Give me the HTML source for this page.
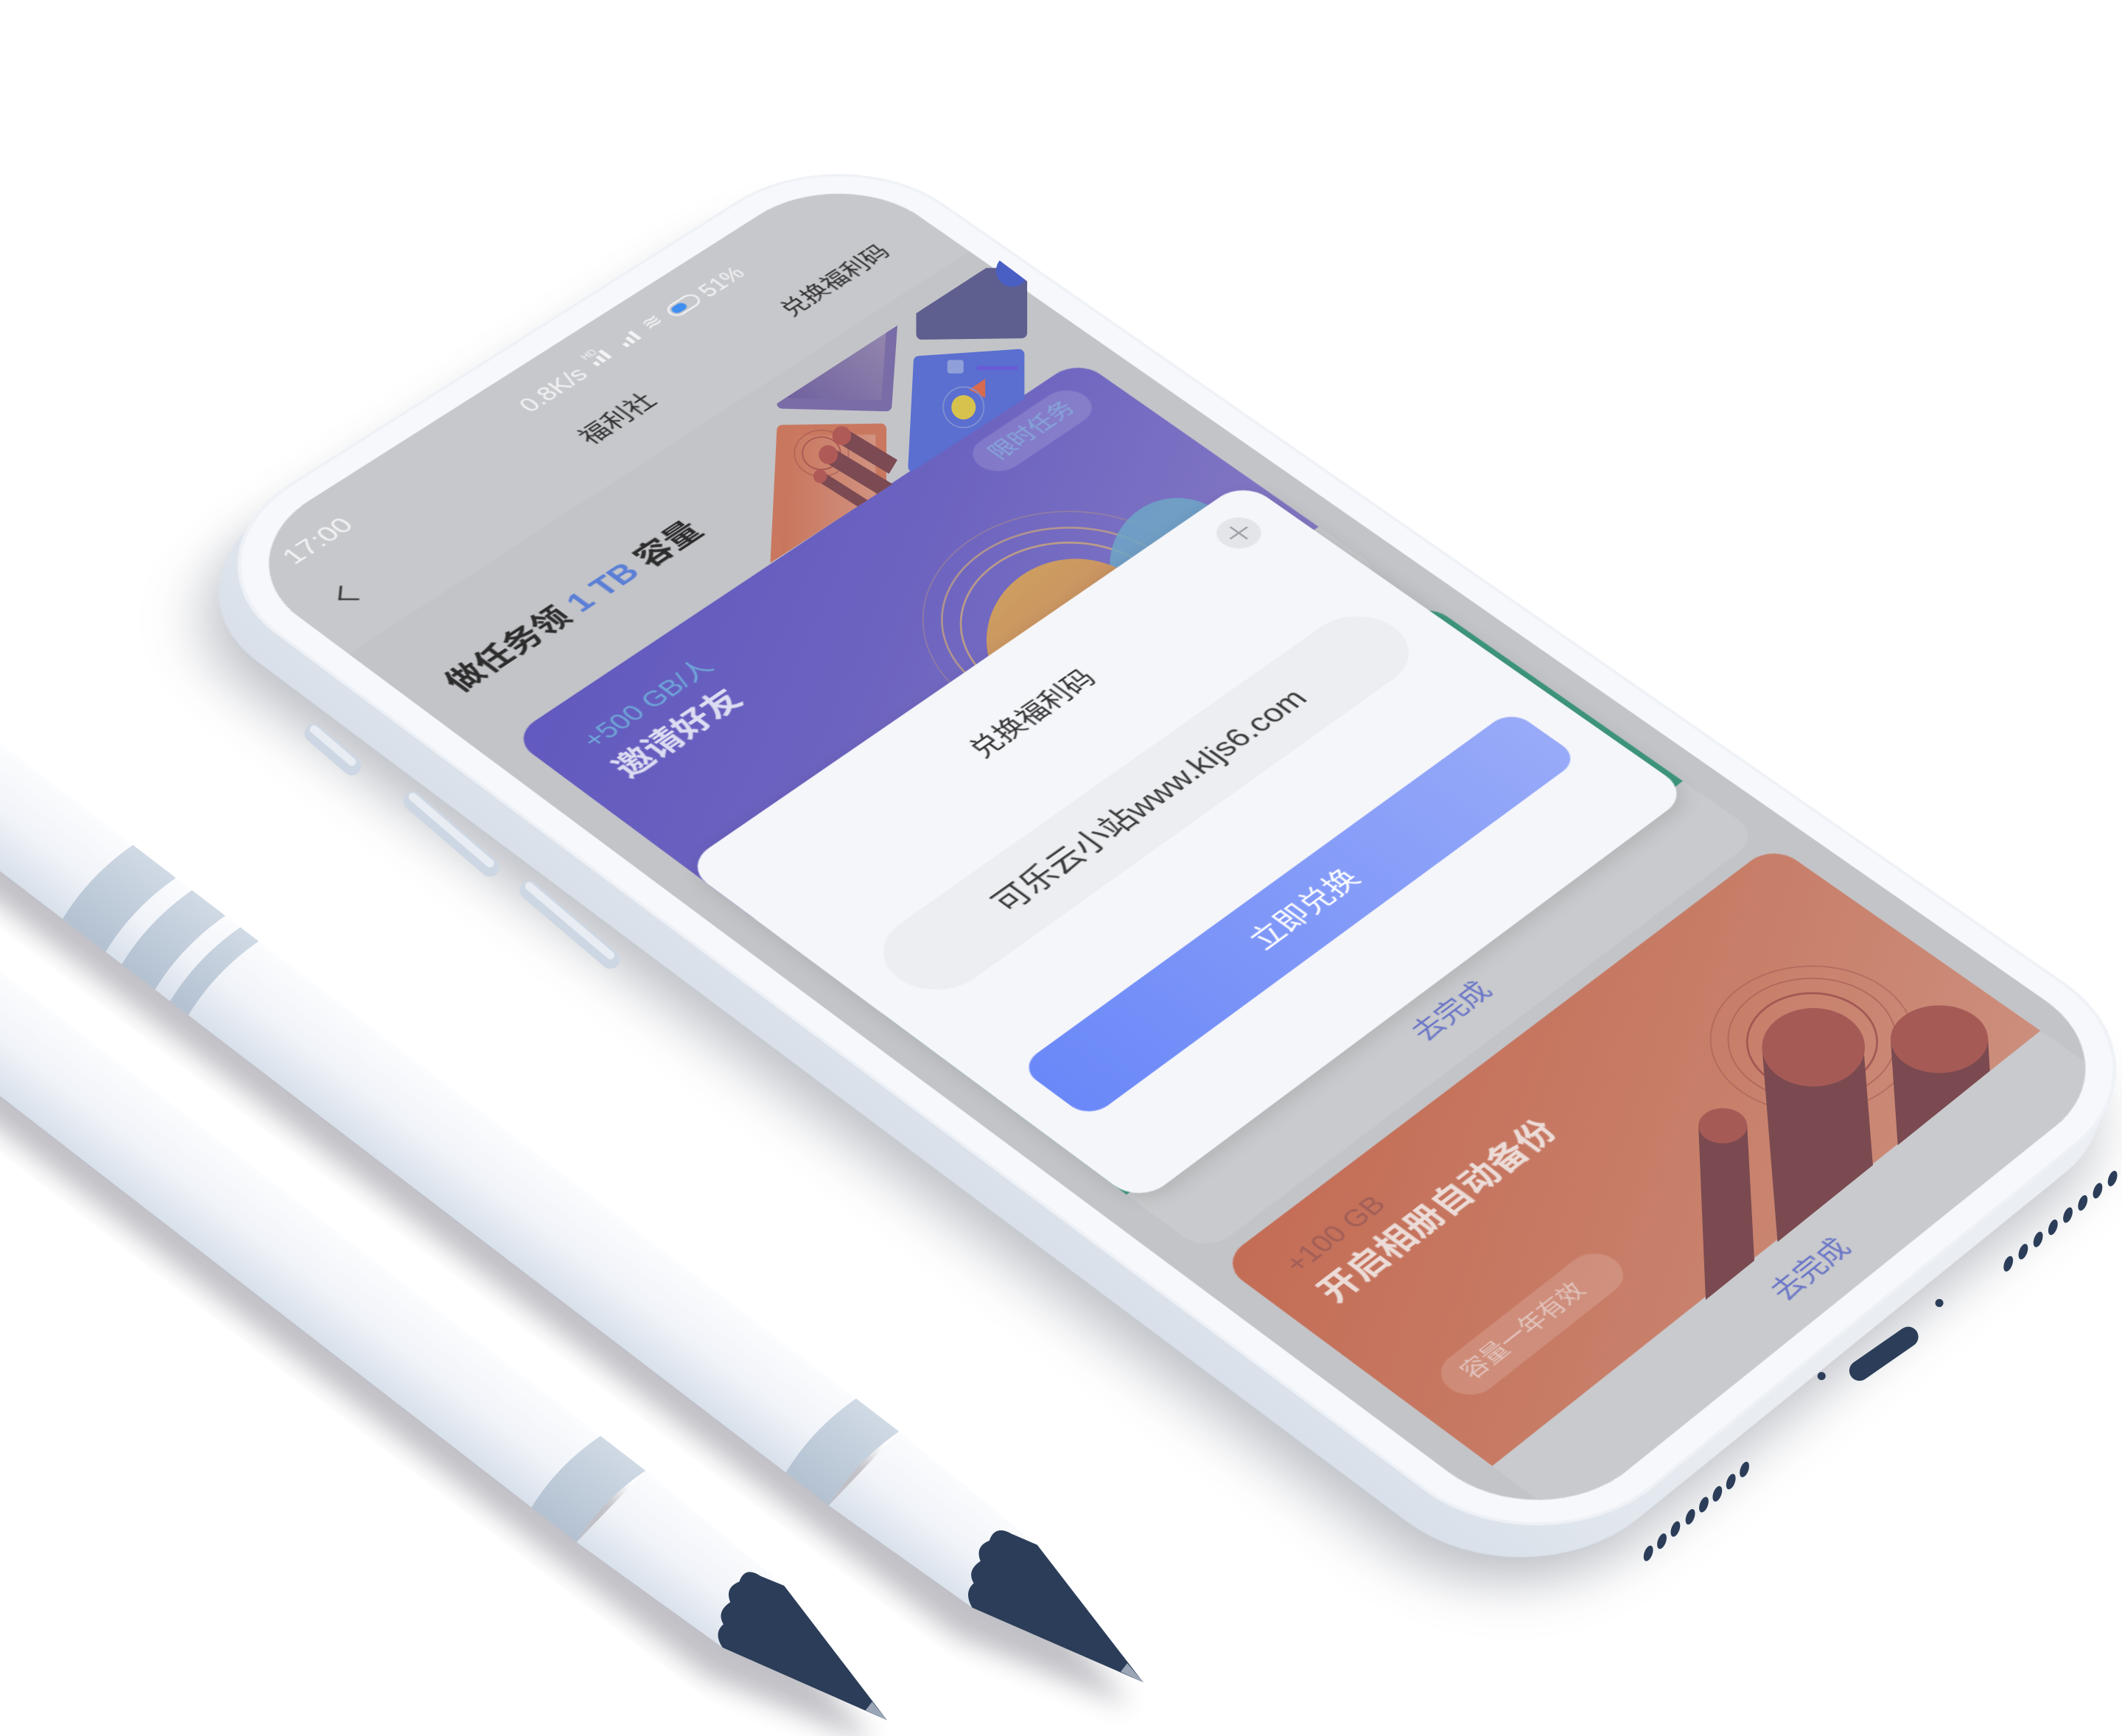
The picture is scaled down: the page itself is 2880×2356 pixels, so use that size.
<!DOCTYPE html>
<html><head><meta charset="utf-8">
<style>
html,body{margin:0;padding:0}
body{width:2880px;height:2356px;background:#fff;position:relative;overflow:hidden;font-family:"Liberation Sans","Noto Sans CJK SC",sans-serif}
.m{position:absolute;left:0;top:0;width:750px;height:1624px;transform-origin:0 0;
transform:matrix3d(1.20947,-0.6992,0,0.00007251, 1.01336,0.73060,0,-0.00004337, 0,0,1,0, 297.6,756.8,0,1)}
.m div{position:absolute;box-sizing:border-box}
.t{white-space:nowrap;line-height:1}
.ov{position:absolute;left:0;top:0;width:2880px;height:2356px}
</style></head><body>

<svg class="ov" viewBox="0 0 1568 1283" preserveAspectRatio="none" style="z-index:0">
<defs>
<linearGradient id="pg" x1="0" y1="0" x2="0" y2="1"><stop offset="0" stop-color="#fbfcfe"/><stop offset=".55" stop-color="#f0f3f8"/><stop offset="1" stop-color="#d8e0ea"/></linearGradient>
<linearGradient id="bg" x1="0" y1="0" x2="0" y2="1"><stop offset="0" stop-color="#d0dae5"/><stop offset="1" stop-color="#b3c1d1"/></linearGradient>
<filter id="bl" x="-20%" y="-20%" width="140%" height="140%"><feGaussianBlur stdDeviation="9"/></filter>
</defs>
<g transform="translate(0,763.75) rotate(37.75)">
<path d="M-300,-30 L575,-30 L700,-30 L829,0 L700,36 L-300,36Z" fill="#334" opacity=".3" filter="url(#bl)" transform="translate(4,20)"/>
<rect x="-300" y="-36.5" width="833" height="73" fill="url(#pg)"/>
<path d="M533,-36.5 Q521,0 525,36.5 L567,36.5 Q563,0 575,-36.5Z" fill="url(#bg)"/>
<path d="M575,-36.5 L708,-32 L700,32 L567,36.5Z" fill="url(#pg)"/>
<path d="M708,-32 L829,0 L700,32 Q688,28 690,18 Q680,14 684,2 Q674,-4 680,-14 Q676,-26 690,-27Z" fill="#2b3d58"/>
<path d="M812,-4 L829,0 L812,4Z" fill="#9aa6b6"/>
</g>
<g transform="translate(0,596.5) rotate(37.44)">
<path d="M-300,-30 L768,-30 L930,-30 L1064,0 L930,37 L-300,37Z" fill="#334" opacity=".3" filter="url(#bl)" transform="translate(4,20)"/>
<rect x="-300" y="-37.5" width="1068" height="75" fill="url(#pg)"/>
<path d="M95,-37.5 Q83,0 87,37.5 L127,37.5 Q123,0 135,-37.5Z" fill="url(#bg)"/>
<path d="M150,-37.5 Q138,0 142,37.5 L173,37.5 Q169,0 181,-37.5Z" fill="url(#bg)"/>
<path d="M195,-37.5 Q183,0 187,37.5 L204,37.5 Q200,0 212,-37.5Z" fill="url(#bg)"/>
<path d="M768,-37.5 Q756,0 760,37.5 L800,37.5 Q796,0 808,-37.5Z" fill="url(#bg)"/>
<path d="M808,-37.5 L940,-33 L930,33 L800,37.5Z" fill="url(#pg)"/>
<path d="M940,-33 L1064,0 L930,33 Q918,28 920,18 Q910,14 914,2 Q904,-4 910,-14 Q906,-26 920,-28Z" fill="#2b3d58"/>
<path d="M1046,-4 L1064,0 L1046,4Z" fill="#9aa6b6"/>
</g>
</svg>

<div class="m" style="z-index:1">
  <div style="left:-90px;top:0px;width:806px;height:1680px;border-radius:140px;background:rgba(40,50,70,.3);filter:blur(26px)"></div>
  <div style="left:-62px;top:-14px;width:806px;height:1680px;border-radius:135px;background:linear-gradient(90deg,#d9e0e9,#e9edf2 30%,#eceff4)"></div>
  <div style="left:-28px;top:-28px;width:806px;height:1680px;border-radius:135px;background:#f7f8fb;box-shadow:inset 0 0 0 3px #eef1f6"></div>
  <div style="left:0;top:0;width:750px;height:1624px;border-radius:105px;overflow:hidden;background:#c3c4c8">
    <div style="left:0;top:0;width:750px;height:170px;background:#c7c8cc"></div>
    <div class="t" style="left:40px;top:30px;font-size:28px;color:#f3f3f5">17:00</div>
    <div class="t" style="left:318px;top:32px;font-size:25px;color:#f3f3f5">0.8K/s</div>
    <div class="t" style="left:400px;top:28px;font-size:10px;color:#f3f3f5">HD</div>
    <div style="left:402px;top:42px;width:4px;height:6px;background:#f3f3f5"></div>
    <div style="left:409px;top:38px;width:4px;height:10px;background:#f3f3f5"></div>
    <div style="left:416px;top:34px;width:4px;height:14px;background:#f3f3f5"></div>
    <div style="left:438px;top:42px;width:4px;height:6px;background:#f3f3f5"></div>
    <div style="left:445px;top:38px;width:4px;height:10px;background:#f3f3f5"></div>
    <div style="left:452px;top:34px;width:4px;height:14px;background:#f3f3f5"></div>
    <div class="t" style="left:468px;top:28px;font-size:22px;color:#f3f3f5">≋</div>
    <div style="left:496px;top:33px;width:34px;height:18px;border:2px solid #f3f3f5;border-radius:9px"><div style="left:2px;top:2px;width:15px;height:10px;border-radius:5px;background:#3f8ef0"></div></div>
    <div class="t" style="left:536px;top:32px;font-size:23px;color:#f3f3f5">51%</div>
    <div style="left:42px;top:104px;width:18px;height:18px;border-left:2.5px solid #333;border-bottom:2.5px solid #333;transform:rotate(45deg)"></div>
    <div class="t" style="left:328px;top:99px;font-size:27px;color:#333">福利社</div>
    <div class="t" style="left:572px;top:102px;font-size:25px;color:#2f2f2f">兑换福利码</div>
    <div class="t" style="left:36px;top:246px;font-size:33px;font-weight:bold;color:#2c2c2c">做任务领 <span style="color:#5b7fd6">1 TB</span> 容量</div>

    <div style="left:30px;top:345px;width:690px;height:395px;border-radius:28px;background:#c9cacd;overflow:hidden">
      <div style="left:0;top:0;width:690px;height:310px;background:linear-gradient(150deg,#6159be 0%,#6c63c0 45%,#8479c4 100%)"></div>
      <div class="t" style="left:42px;top:40px;font-size:27px;color:#6fa6d8">+500 GB/人</div>
      <div class="t" style="left:38px;top:82px;font-size:34px;font-weight:bold;color:#dcdcf2">邀请好友</div>
      <div style="left:528px;top:16px;width:132px;height:46px;border-radius:23px;background:rgba(255,255,255,.14)"></div>
      <div class="t" style="left:546px;top:27px;font-size:24px;color:#86a6da">限时任务</div>
      <div class="t" style="left:303px;top:338px;font-size:28px;color:#6a76c6">去完成</div>
    </div>
    <div style="left:30px;top:790px;width:690px;height:415px;border-radius:28px;background:#c9cacd;overflow:hidden">
      <div style="left:0;top:0;width:690px;height:320px;background:#3f9a80"></div>
      <div class="t" style="left:303px;top:355px;font-size:28px;color:#6a76c6">去完成</div>
    </div>
    <div style="left:30px;top:1220px;width:690px;height:440px;border-radius:28px;background:#c9cacd;overflow:hidden">
      <div style="left:0;top:0;width:690px;height:320px;background:linear-gradient(150deg,#c46c55 0%,#c77c66 50%,#cc8e7c 100%)"></div>
      <div class="t" style="left:38px;top:34px;font-size:27px;color:#a05e57">+100 GB</div>
      <div class="t" style="left:36px;top:74px;font-size:34px;font-weight:bold;color:#ecdcd8">开启相册自动备份</div>
      <div style="left:36px;top:212px;width:200px;height:48px;border-radius:24px;background:rgba(255,255,255,.15)"></div>
      <div class="t" style="left:56px;top:224px;font-size:23px;color:#e2c4bd">容量一年有效</div>
      <div class="t" style="left:303px;top:350px;font-size:28px;color:#6a76c6">去完成</div>
    </div>
  </div>
</div>

<svg class="ov" viewBox="0 0 1568 1283" preserveAspectRatio="none" style="z-index:2">
<defs>
<clipPath id="tc"><polygon points="272,494 738,192 820,254 354,555"/></clipPath>
<clipPath id="pc"><polygon points="392,556 806,285 990,415 574,693"/></clipPath>
<clipPath id="oc"><polygon points="910,935 1320,640 1502,766 1106,1085"/></clipPath>
<linearGradient id="og" x1="0" y1="0" x2="1" y2="0"><stop offset="0" stop-color="#c8735a"/><stop offset="1" stop-color="#d19482"/></linearGradient>
<linearGradient id="ug" x1="0" y1="1" x2="1" y2="0"><stop offset="0" stop-color="#6e5f9e"/><stop offset="1" stop-color="#9a8db0"/></linearGradient>
<linearGradient id="sg" x1="0" y1="0" x2="1" y2="1"><stop offset="0" stop-color="#d0a45e"/><stop offset="1" stop-color="#c07a6a"/></linearGradient>
</defs>
<g clip-path="url(#tc)" stroke-linejoin="round">
  <polygon points="578,235 660,228 655,300 578,298" fill="url(#ug)" stroke="#7a6ca6" stroke-width="8"/>
  <polygon points="681,202 755,202 755,246 681,247" fill="#5e5f8e" stroke="#5e5f8e" stroke-width="8"/>
  <circle cx="748" cy="200" r="12" fill="#4a5fc4"/>
  <polygon points="578,318 651,317 651,420 573,420" fill="url(#og)" stroke="#c9785f" stroke-width="8"/>
  <ellipse cx="607" cy="335" rx="14" ry="12" fill="none" stroke="#a85a52" stroke-width="1"/>
  <ellipse cx="607" cy="335" rx="20" ry="17" fill="none" stroke="#a85a52" stroke-width="1" opacity=".6"/>
  <line x1="622" y1="322" x2="660" y2="345" stroke="#7b4a52" stroke-width="12"/>
  <line x1="612" y1="336" x2="660" y2="365" stroke="#7b4a52" stroke-width="12"/>
  <line x1="606" y1="352" x2="650" y2="380" stroke="#7b4a52" stroke-width="8"/>
  <circle cx="622" cy="322" r="7" fill="#b05a58"/><circle cx="612" cy="336" r="7" fill="#b05a58"/><circle cx="606" cy="352" r="5" fill="#b05a58"/>
  <polygon points="679,267 753,262 753,345 675,345" fill="#5a6fd0" stroke="#5a6fd0" stroke-width="8"/>
  <rect x="700" y="266" width="12" height="10" rx="2" fill="#8f9fd8"/>
  <polygon points="716,288 728,280 728,294" fill="#d86a50"/>
  <circle cx="712" cy="301" r="15" fill="none" stroke="#7f8fd0" stroke-width="1"/>
  <circle cx="712" cy="301" r="9" fill="#d8c24e"/>
  <line x1="722" y1="272" x2="752" y2="272" stroke="#6a5ad8" stroke-width="3"/>
</g>
<g clip-path="url(#pc)">
  <ellipse cx="790" cy="458" rx="108" ry="80" fill="none" stroke="#c8a070" stroke-width="1" opacity=".35"/>
  <ellipse cx="790" cy="458" rx="94" ry="68" fill="none" stroke="#d8b070" stroke-width="1.5" opacity=".6"/>
  <ellipse cx="790" cy="461" rx="80" ry="60" fill="none" stroke="#d8b070" stroke-width="1.5" opacity=".7"/>
  <circle cx="870" cy="418" r="50" fill="#6fa6c6" opacity=".85"/>
  <ellipse cx="795" cy="473" rx="66" ry="60" fill="url(#sg)"/>
</g>
<g clip-path="url(#oc)">
  <ellipse cx="1339" cy="768" rx="75" ry="54" fill="none" stroke="#a85e55" stroke-width="1" opacity=".6"/>
  <ellipse cx="1339" cy="768" rx="62" ry="45" fill="none" stroke="#a85e55" stroke-width="1" opacity=".7"/>
  <ellipse cx="1339" cy="770" rx="48" ry="36" fill="none" stroke="#9a4e4e" stroke-width="1.5" opacity=".8"/>
  <polygon points="1255,832 1291,832 1300,1000 1262,1000" fill="#7a4a50"/>
  <ellipse cx="1273" cy="832" rx="18" ry="13" fill="#a65a56"/>
  <polygon points="1302,774 1377,774 1395,1000 1320,1000" fill="#7a4a50"/>
  <ellipse cx="1340" cy="774" rx="38" ry="29" fill="#a65a56"/>
  <polygon points="1397,768 1469,768 1480,960 1410,960" fill="#7a4a50"/>
  <ellipse cx="1433" cy="768" rx="36" ry="25" fill="#a65a56"/>
</g>
<g stroke-linecap="round" fill="none">
  <line x1="232" y1="542" x2="260" y2="566" stroke="#cdd7e3" stroke-width="14"/>
  <line x1="232" y1="539" x2="260" y2="563" stroke="#e8edf3" stroke-width="6"/>
  <line x1="305" y1="592" x2="362" y2="641" stroke="#cdd7e3" stroke-width="14"/>
  <line x1="305" y1="589" x2="362" y2="638" stroke="#e8edf3" stroke-width="6"/>
  <line x1="391" y1="658" x2="451" y2="709" stroke="#cdd7e3" stroke-width="14"/>
  <line x1="391" y1="655" x2="451" y2="706" stroke="#e8edf3" stroke-width="6"/>
  <line x1="1374" y1="1013" x2="1410" y2="988" stroke="#2b3d58" stroke-width="15"/>
</g>
<g fill="#2b3d58">
  <circle cx="1346" cy="1017" r="3"/><circle cx="1433" cy="963" r="3"/>
  <ellipse cx="1218" cy="1148" rx="3" ry="6" transform="rotate(20 1218 1148)"/>
  <ellipse cx="1228" cy="1139" rx="3" ry="6" transform="rotate(20 1228 1139)"/>
  <ellipse cx="1238" cy="1130" rx="3" ry="6" transform="rotate(20 1238 1130)"/>
  <ellipse cx="1249" cy="1121" rx="3" ry="6" transform="rotate(20 1249 1121)"/>
  <ellipse cx="1259" cy="1112" rx="3" ry="6" transform="rotate(20 1259 1112)"/>
  <ellipse cx="1269" cy="1104" rx="3" ry="6" transform="rotate(20 1269 1104)"/>
  <ellipse cx="1279" cy="1095" rx="3" ry="6" transform="rotate(20 1279 1095)"/>
  <ellipse cx="1289" cy="1086" rx="3" ry="6" transform="rotate(20 1289 1086)"/>
  <ellipse cx="1484" cy="934" rx="3" ry="6" transform="rotate(20 1484 934)"/>
  <ellipse cx="1495" cy="925" rx="3" ry="6" transform="rotate(20 1495 925)"/>
  <ellipse cx="1506" cy="916" rx="3" ry="6" transform="rotate(20 1506 916)"/>
  <ellipse cx="1517" cy="907" rx="3" ry="6" transform="rotate(20 1517 907)"/>
  <ellipse cx="1528" cy="898" rx="3" ry="6" transform="rotate(20 1528 898)"/>
  <ellipse cx="1539" cy="889" rx="3" ry="6" transform="rotate(20 1539 889)"/>
  <ellipse cx="1550" cy="880" rx="3" ry="6" transform="rotate(20 1550 880)"/>
  <ellipse cx="1561" cy="871" rx="3" ry="6" transform="rotate(20 1561 871)"/>
</g>
</svg>

<div class="m" style="z-index:3">
  <div style="left:30px;top:565px;width:684px;height:560px;border-radius:30px;background:#f5f6fa;box-shadow:0 6px 20px rgba(0,0,0,.12)">
    <div style="left:613px;top:25px;width:40px;height:40px;border-radius:20px;background:#e4e5e9"></div>
    <div style="left:622px;top:44px;width:22px;height:2px;background:#9fa0a8"></div>
    <div style="left:632px;top:34px;width:2px;height:22px;background:#9fa0a8"></div>
    <div class="t" style="left:272px;top:66px;font-size:28px;color:#333">兑换福利码</div>
    <div style="left:38px;top:182px;width:608px;height:92px;border-radius:46px;background:#eceef1"></div>
    <div class="t" style="left:38px;top:212px;width:608px;text-align:center;font-size:32px;color:#3a3a3a">可乐云小站www.kljs6.com</div>
    <div style="left:38px;top:375px;width:608px;height:86px;border-radius:22px;background:linear-gradient(90deg,#6a88f8,#98aaf8)"></div>
    <div class="t" style="left:38px;top:403px;width:608px;text-align:center;font-size:30px;color:#fff">立即兑换</div>
  </div>
</div>
</body></html>
